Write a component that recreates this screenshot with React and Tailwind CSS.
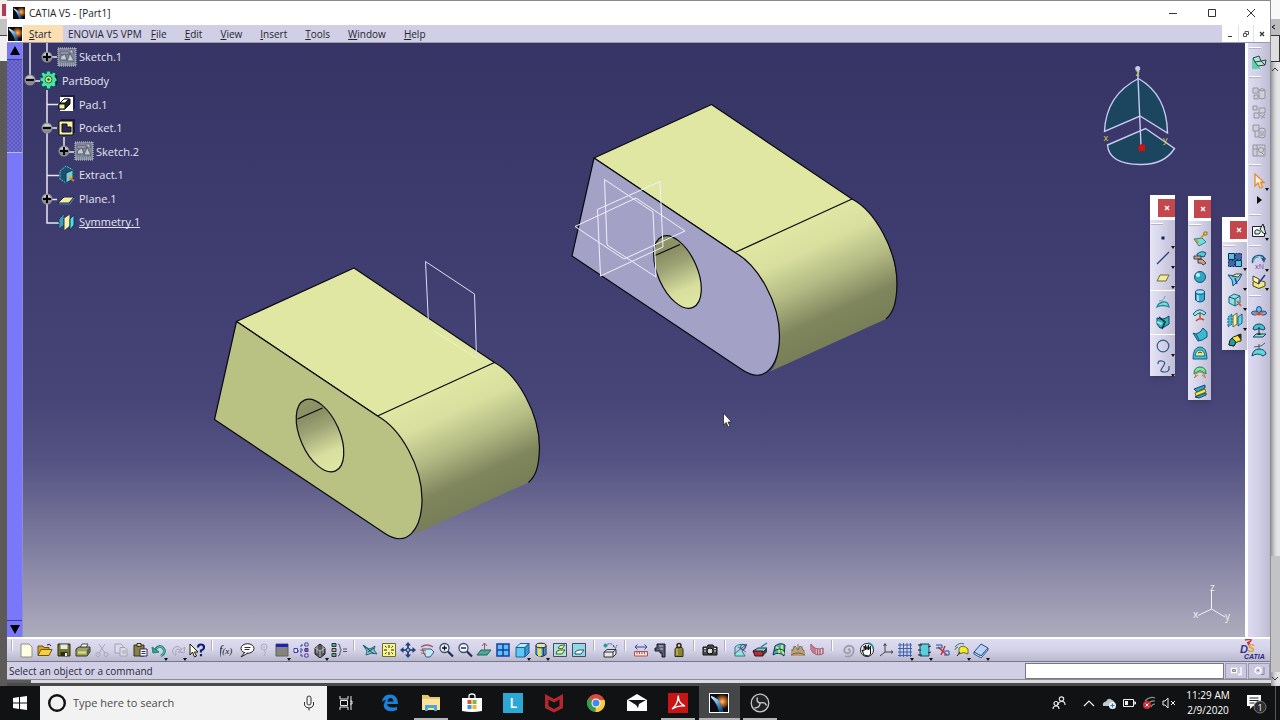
import React, { useId } from "react";

/* ---------- small 16x16 drawings used by the toolbars ---------- */

const K = "#1b1b2b";

const icons = {
  new: <path d="M3 2h8l3 3v10H3z" fill="#ffffe1" stroke="#8d8d80" />,
  open: (
    <>
      <path d="M1 13V4h5l1 1.500h5V8" fill="#d9a51c" stroke="#6d5510" />
      <path d="M1 13.500l3-6h11l-3 6z" fill="#f6cf42" stroke="#6d5510" />
      <path d="M10 3q3-2 4 1" fill="none" stroke={K} />
    </>
  ),
  save: (
    <>
      <path d="M2 2h12v12H2z" fill="#72772c" stroke="#2b2d14" />
      <path d="M4.500 2.500h7v4.500h-7z" fill="#e9e9f2" />
      <path d="M4.500 10h7v4h-7z" fill="#2b2d14" />
      <path d="M9 11h2v3H9z" fill="#e9e9f2" />
    </>
  ),
  print: (
    <>
      <path d="M5 6l2-4h6l-2 4z" fill="#fff" stroke="#445" />
      <path d="M1 7l3-2h11v5l-3 4H1z" fill="#9aa070" stroke="#34381f" />
      <path d="M3 10.500h8" stroke="#e6e35c" strokeWidth="2" />
      <path d="M12 8v5l3-3V5z" fill="#5b6136" />
    </>
  ),
  cut: (
    <g fill="none" stroke="#a9a9b8">
      <path d="M5 2l6 9M11 2L5 11" />
      <circle cx="4" cy="12.500" r="2" />
      <circle cx="12" cy="12.500" r="2" />
    </g>
  ),
  copy: (
    <g fill="#dcdbe9" stroke="#a3a3b3">
      <path d="M2 2h6l2 2v7H2z" />
      <path d="M7 5.500h5l2 2V14H7zM9 9h4M9 11h4" />
    </g>
  ),
  paste: (
    <>
      <path d="M2 3h10v11H2z" fill="#878241" stroke="#33321a" />
      <path d="M5 1.500h4v3H5z" fill="#d8d8a0" stroke="#33321a" />
      <path d="M8 7h7v7H8z" fill="#fff" stroke="#28286b" />
      <path d="M9.500 9.500h4M9.500 11.500h4" stroke="#28286b" />
    </>
  ),
  undo: (
    <>
      <path d="M4 8q4-6 8-2t-2 8" fill="none" stroke="#1f7f6d" strokeWidth="2.600" />
      <path d="M4.500 7.500q4-5 7.500-1.500t-2 8" fill="none" stroke="#57d9b0" />
      <path d="M1 5l1 6 6-1z" fill="#2da98c" stroke="#1f7f6d" />
    </>
  ),
  redo: (
    <g fill="none" stroke="#a9a9b8">
      <path d="M12 8Q8 2 4 6t2 8M6 13q-1-6 2-6t3 3" />
      <path d="M15 5l-1 6-6-1z" />
    </g>
  ),
  help: (
    <>
      <path d="M1 2v11l2.500-3 2 5 2-1-2-4H9z" fill="#fffdd0" stroke={K} />
      <path d="M9 5.500q0-3 3-3t3 2.700-3 3.300v2M12 12v2.200" fill="none" stroke="#14206e" strokeWidth="2.200" />
    </>
  ),
  fx: (
    <text x="-1" y="12" fontSize="12" fontStyle="italic" fill="#111" fontFamily="Liberation Serif, serif">
      f<tspan fontSize="9">(x)</tspan>
    </text>
  ),
  comment: (
    <g stroke="#222" fill="#fff">
      <ellipse cx="8.500" cy="6.500" rx="6.500" ry="4.800" />
      <path d="M6 10l-4 5 7-4" />
      <path d="M5.500 5.500h6M5.500 7.500h5" stroke="#333" />
    </g>
  ),
  ghost: (
    <g fill="none" stroke="#aaaab9">
      <circle cx="8" cy="5" r="3" />
      <path d="M8 8q3 2 0 6M7 5h2" />
    </g>
  ),
  table: (
    <>
      <path d="M2 2h12v12H2z" fill="#85857d" stroke="#5e5e66" />
      <path d="M2 2h12v3H2z" fill="#2121b4" />
    </>
  ),
  tree: (
    <g stroke="#3a3aa8" fill="#fff">
      <path d="M4 9h4M8 3v11M8 3h4M8 8h4M8 14h4" fill="none" strokeDasharray="2 1" />
      <path d="M1 6.500h3.500v4H1z" fill="#e8e8ff" />
      <path d="M12 1h3v3h-3z" />
      <path d="M12 6.500h3v3h-3z" fill="#d94545" />
      <path d="M12 12h3v3h-3z" />
    </g>
  ),
  ball: (
    <>
      <path d="M3 6l5-4 5 4v6l-5 4-5-4z" fill="#55555c" stroke="#1c1c1c" />
      <path d="M3 6l5 3 5-3M8 9v6M5 4v7M11 4v7" stroke="#b9b9c0" fill="none" />
    </>
  ),
  eq: (
    <>
      <path d="M1 1.500h4v3H1z" fill="#47b58a" stroke="#234" />
      <path d="M1 6.500h4v3H1z" fill="#e0a83e" stroke="#234" />
      <path d="M1 11.500h4v3H1z" fill="#47b58a" stroke="#234" />
      <path d="M7 2q2 0 2 3t1.500 3Q9 8 9 11t-2 3M12 7h4M12 9.500h4" fill="none" stroke="#556" />
    </>
  ),
  fly: (
    <>
      <path d="M1 3l6 4 3-1 3-2-1 4 3 4-5-1-6 2 1-4z" fill="#7fcfc8" stroke="#27677a" />
      <path d="M2 4l10 8M6 10l6-4" stroke="#1d4656" />
    </>
  ),
  fit: (
    <>
      <path d="M1.500 1.500h13v13h-13z" fill="#f7f58c" stroke="#6c6c2e" />
      <path d="M8 3v3M8 10v3M3 8h3M10 8h3M4 4l1.500 1.500M12 4l-1.500 1.500M4 12l1.500-1.500M12 12l-1.500-1.500" stroke="#222" />
    </>
  ),
  pan: (
    <>
      <path d="M8 2v12M2 8h12" stroke="#1c2f66" strokeWidth="1.600" />
      <path d="M8 0l3 3.500H5zM8 16l3-3.500H5zM0 8l3.500-3v6zM16 8l-3.500-3v6z" fill="#1c3f86" />
      <circle cx="8" cy="8" r="2" fill="#8fb7e8" stroke="#1c2f66" />
    </>
  ),
  rotate: (
    <>
      <path d="M2 5q6-4 12 0" fill="none" stroke="#b05656" strokeWidth="1.400" />
      <path d="M3 7h9l3 3-4 5H7z" fill="#c5e8f4" stroke="#315a86" />
      <path d="M1 8l6 1M2 11l5 1" stroke="#b05656" />
    </>
  ),
  zoomin: (
    <>
      <circle cx="6.500" cy="6" r="4.500" fill="#eef6ff" stroke="#3c4c76" strokeWidth="1.300" />
      <path d="M10 9.500l5 5" stroke="#222b4b" strokeWidth="2.200" />
      <path d="M4 6h5M6.500 3.500v5" stroke="#111" strokeWidth="1.300" />
    </>
  ),
  zoomout: (
    <>
      <circle cx="6.500" cy="6" r="4.500" fill="#eef6ff" stroke="#3c4c76" strokeWidth="1.300" />
      <path d="M10 9.500l5 5" stroke="#222b4b" strokeWidth="2.200" />
      <path d="M4 6h5" stroke="#111" strokeWidth="1.300" />
    </>
  ),
  normal: (
    <>
      <path d="M1 13l4-5h10l-4 5z" fill="#3fae9b" stroke="#1d6257" />
      <path d="M8.500 10V1M6 4l2.500-3L11 4" fill="none" stroke="#a05858" />
    </>
  ),
  multi: (
    <>
      <path d="M2 2h12v12H2z" fill="#57c4f5" stroke="#1d3b9e" strokeWidth="1.500" />
      <path d="M8 2v12M2 8h12" stroke="#1d3b9e" strokeWidth="1.500" />
    </>
  ),
  cube: (
    <>
      <path d="M2 5.500h9V15H2z" fill="#5fc8f2" stroke="#205e9c" />
      <path d="M2 5.500L6 1.500h9l-4 4z" fill="#b6ecff" stroke="#205e9c" />
      <path d="M11 5.500l4-4V11l-4 4z" fill="#3596d4" stroke="#205e9c" />
    </>
  ),
  cyl: (
    <>
      <path d="M3 3.500v9q5 4 10 0v-9" fill="#6ccde8" stroke={K} />
      <path d="M5 5h3v9.500H5z" fill="#e7de4d" />
      <path d="M9.500 5h2v9h-2z" fill="#23418b" />
      <ellipse cx="8" cy="3.500" rx="5" ry="2.300" fill="#dfe9ae" stroke={K} />
    </>
  ),
  view1: (
    <>
      <path d="M1.500 1.500h13v13h-13z" fill="#aee0ea" stroke="#4c4c58" />
      <path d="M4 12q0-4 4-4h5l-3 4zM6 6q1-3 5-3h2l-3 4z" fill="#f5ef98" stroke="#2c6a3c" />
    </>
  ),
  view2: (
    <>
      <path d="M1.500 1.500h13v13h-13z" fill="#8ddbe6" stroke="#4c4c58" />
      <path d="M4 12q0-4 5-4h4l-3 4z" fill="#fff" stroke="#2c4a7c" />
    </>
  ),
  print3d: (
    <>
      <path d="M3 4q5-5 10 1M11 4l2.500 2.500L15 3" fill="none" stroke="#2a4b9c" strokeDasharray="2 1" />
      <circle cx="3.500" cy="3.500" r="2" fill="#2d9b9b" />
      <path d="M2 10l3-2.500h9V12l-3 3H2zM2 10h9v5M11 10l3-2.500" fill="#e4e4ea" stroke="#333" />
    </>
  ),
  measure: (
    <>
      <path d="M2 5h12M4.500 2.500L2 5l2.500 2.500M11.500 2.500L14 5l-2.500 2.500" fill="none" stroke="#2a4b9c" />
      <path d="M1.500 9.500h13V14h-13z" fill="#fbe3d9" stroke="#b14e4e" />
      <path d="M4 10v2M6.500 10v2M9 10v2M11.500 10v2" stroke="#b14e4e" />
    </>
  ),
  caliper: (
    <>
      <path d="M5 2h8v13h-3v-4H8V9H3V6h2z" fill="#565c70" stroke="#16181f" />
      <path d="M7 4h4M8 7h3" stroke="#c5c9d6" />
    </>
  ),
  weight: (
    <>
      <path d="M5 5.500h6q1 1 1 2v7H4v-7q0-1 1-2z" fill="#8c8434" stroke="#302d10" />
      <circle cx="8" cy="3.500" r="2" fill="none" stroke="#302d10" strokeWidth="1.500" />
      <path d="M6 7v6" stroke="#d4cc78" />
    </>
  ),
  camera: (
    <>
      <path d="M1 5h4l1-2h5l1 2h3v8H1z" fill="#4a4a4a" stroke="#111" />
      <circle cx="8" cy="9" r="3" fill="#d8d8d8" stroke="#000" />
      <path d="M2 6.500h2M12 6.500h2M2 9h2M12 9h2" stroke="#ddd" />
    </>
  ),
  s1: (
    <>
      <path d="M2 5q4-4 12-2l-5 6 3 5H2z" fill="#8fe3e5" stroke="#287889" />
      <path d="M1 12L14 2M5 5l8 5" stroke="#b83a5e" fill="none" />
      <circle cx="10" cy="5" r="2.500" fill="none" stroke="#2a4b9c" />
    </>
  ),
  s2: (
    <>
      <path d="M1 9l5-3h9l-4 4z" fill="#6fdad4" stroke="#1e2f40" />
      <path d="M1 9h10v5H3z" fill="#b72d3c" stroke="#3c1018" />
      <path d="M11 10l4-4v4l-4 4z" fill="#38424f" />
      <path d="M9 5l6-4" stroke="#1d8e9c" strokeWidth="1.500" />
    </>
  ),
  s3: (
    <>
      <path d="M2 13L4 4q5-4 10-1l-1 11q-5-5-11-1z" fill="#35b6b0" stroke="#15395a" />
      <path d="M5 5q4 2 3 6M11 3q-1 5 2 9" stroke="#f0e558" strokeWidth="1.800" fill="none" />
      <path d="M3 9q6-4 10 0" stroke="#15395a" fill="none" />
    </>
  ),
  s4: (
    <>
      <path d="M2 14V7M4 14V4M6 14V6M8 14V2M10 14V6M12 14V4M14 14V8" stroke="#d37a28" strokeWidth="1.300" />
      <path d="M1 13q7-4 14 0M2 9l3-5 3 4 2-4 4 5" stroke="#247d8e" fill="none" />
    </>
  ),
  s5: (
    <g stroke="#b25e6c" fill="none">
      <path d="M2 2q4 7 12 4M2 8q4 7 12 4" />
      <path d="M2 2v6M4 4v7M6 6v6M8.500 7v6M11 7v6M14 6v6" strokeWidth="1.400" />
    </g>
  ),
  swirl: (
    <path d="M8 8q2-2 2 1t-4 2Q3 9 5 6t6-2q4 2 2 7t-8 3" fill="none" stroke="#9d9dab" strokeWidth="1.800" />
  ),
  hand: (
    <>
      <circle cx="8" cy="8" r="6.500" fill="#fff" stroke="#222" />
      <path d="M5 13l-2-5 2 1V4l1.500 4V3L8 7.500 9.500 3v5L11.500 4v8l-2 2z" fill="#fff" stroke="#111" />
      <path d="M9 1q5 1 5.500 6" stroke="#1c8e9a" strokeWidth="1.500" fill="none" />
    </>
  ),
  axis: (
    <path d="M7 2v8l-5 4M7 10h8M5.500 4L7 1.500 8.500 4M13 8.500l2 1.500-2 1.500" fill="none" stroke="#444" />
  ),
  grid: (
    <path d="M3 1v14M6.500 1v14M10 1v14M13.500 1v14M1 3h14M1 6.500h14M1 10h14M1 13.500h14" stroke="#3f62ae" />
  ),
  sheet: (
    <>
      <path d="M4 2h9v12H4z" fill="#5ad0d6" stroke="#1d4763" />
      <path d="M2 3h4M2 8h3M2 13h4M12 5l3-1M12 11l3-1" stroke="#222" />
    </>
  ),
  snapx: (
    <>
      <path d="M1 3h6v3H1M9 9h5v4H9" fill="#b8e0f4" stroke="#2a4b9c" />
      <path d="M3 5l9 8M10 4l-4 9" stroke="#bb2a3a" strokeWidth="1.400" />
    </>
  ),
  hl: (
    <>
      <path d="M5 12V6q4-4 9 1v5q-4-3-9 0z" fill="#f2ec2a" stroke="#6a6a22" />
      <path d="M1 5q4-5 9-3M1 8q1-3 3-3" fill="none" stroke="#27776e" />
      <path d="M3 14l3-4" stroke="#222" />
    </>
  ),
  eraser: (
    <>
      <path d="M1 10l7-8 7 4-7 8z" fill="#b9d4ef" stroke="#2a4b9c" />
      <path d="M1 10v2l7 4 7-8V6l-7 8z" fill="#e8f0fb" stroke="#2a4b9c" />
    </>
  ),

  /* vertical bars */
  workbench: (
    <>
      <path d="M1 4l9 11H1z" fill="#60d0ae" />
      <path d="M2 4l6-2 2 5 5-1-1 5-7 1-3-4z" fill="#b7e2d3" stroke="#22463c" />
      <path d="M4 8l6-1 4 4" fill="none" stroke="#22463c" />
    </>
  ),
  g1: (
    <g fill="#cfcfda" stroke="#94949f">
      <path d="M2 3h5v5H2zM3 10h4v4H3z" />
      <path d="M8 5q3-3 6 0v8q-3 2-6 0zM8 5q3 2 6 0" />
    </g>
  ),
  g2: (
    <g fill="#cfcfda" stroke="#94949f">
      <path d="M2 2h4v4H2zM8 4h6v5H8z" />
      <path d="M3 9h5v5H3zM9 11l5 3M14 10l-4 5" />
    </g>
  ),
  g3: (
    <g fill="#cfcfda" stroke="#94949f">
      <path d="M2 2h6v6H2zM4 8v6h4" />
      <path d="M8 6q3-2 6 0v8q-3 2-6 0z" />
      <path d="M10 8v5M12 8v5" />
    </g>
  ),
  g4: (
    <g fill="#cfcfda" stroke="#94949f">
      <path d="M2 3h12v11H2z" />
      <path d="M6 3v11M2 7h12M8 8l5 5" />
      <circle cx="10" cy="8" r="2.500" />
    </g>
  ),
  select: (
    <path d="M4 1v12l3-3 2 5 2.500-1L9.500 9.500H13z" fill="#fff5e0" stroke="#e8892c" strokeWidth="1.300" />
  ),
  play: <path d="M6 4l5 4-5 4z" fill="#111" />,
  sketcher: (
    <>
      <path d="M1.500 3.500h12v10h-12z" fill="#fff" stroke="#222" />
      <path d="M4 11q-1-5 3-4t1 4zM9 6l3-5 3 10-3-1z" fill="#d6efe4" stroke="#222" />
    </>
  ),
  xn: (
    <>
      <path d="M2 9Q1 3 7 2t6 4" fill="none" stroke="#235b86" strokeWidth="2.400" />
      <path d="M2.500 9Q2 3 7 2.500t5 3" fill="none" stroke="#76d2e2" />
      <path d="M10 4l5 0-2 5z" fill="#235b86" />
      <text x="4" y="15" fontSize="7" fill="#7a3ca6">xN</text>
    </>
  ),
  boxy: (
    <>
      <path d="M2 9l6-2 6 2v4l-6 2.500L2 13z" fill="#f1e780" stroke="#4d4618" />
      <path d="M2 3l6 3v5L2 8z" fill="#fbf6b0" stroke="#4d4618" />
      <path d="M7 11l7-9" stroke="#233c97" strokeWidth="1.500" />
    </>
  ),
  flower: (
    <>
      <ellipse cx="8" cy="5.500" rx="2.500" ry="3" fill="#5ad0d6" stroke="#22409a" />
      <ellipse cx="4" cy="9" rx="3.500" ry="2" fill="#5ab8e0" stroke="#22409a" />
      <ellipse cx="12" cy="9" rx="3.500" ry="2" fill="#5ab8e0" stroke="#22409a" />
      <path d="M3 8l10 3M13 8L3 11" stroke="#e2603c" strokeWidth="1.300" />
      <circle cx="8" cy="10" r="1.500" fill="#e03c3c" />
    </>
  ),
  surfA: (
    <>
      <path d="M2 6q1-5 6-5t6 5l-2 1q-4-3-8 0z" fill="#41c6c6" stroke="#173f7a" />
      <path d="M2 14l3-3h10l-3 3z" fill="#86e6c2" stroke="#173f7a" />
      <path d="M8 4v8M6 11h4" stroke="#222" />
    </>
  ),
  surfB: (
    <>
      <path d="M1 14q1-7 7-7t7 5l-3 2q-5-4-11 0z" fill="#58dcd2" stroke="#173f7a" />
      <path d="M3 5l7-1 4-3M8 2v6" stroke="#4c5c73" fill="none" />
    </>
  ),
  dot: <path d="M6.500 6.500h3v3h-3z" fill="#14204a" />,
  line: <path d="M2 14L14 2" stroke="#27406f" strokeWidth="1.300" />,
  plane: <path d="M2 11l3-6h9l-3 6z" fill="#f1eb9c" stroke="#6e6a30" />,
  proj: (
    <>
      <path d="M2 13q1-4 6-5t6 5q-6-3-12 0z" fill="#7ee8a8" stroke="#2285b5" strokeWidth="1.300" />
      <path d="M4 7q5 0 6-5" fill="none" stroke="#66a7a0" />
    </>
  ),
  inter: (
    <>
      <path d="M2 4q6 3 12-2v8q-5 4-9 4l-3-4z" fill="#35b5a5" stroke="#173f7a" />
      <path d="M4 3l6 5-3 7" fill="none" stroke="#112c5a" strokeWidth="1.600" />
      <path d="M2 8l5 2" stroke="#7fe9e9" strokeWidth="2" />
    </>
  ),
  circle: <circle cx="8" cy="8" r="5.800" fill="none" stroke="#2e5c8c" strokeWidth="1.200" />,
  spline: (
    <path d="M3 6Q3 2 7 3t2 4-3 5 4 2 4-6" fill="none" stroke="#2e4c8c" strokeWidth="1.200" />
  ),
  extr: (
    <>
      <path d="M2 8l8-1 4 4-7 4z" fill="#6fe0d2" stroke="#2a7fa6" />
      <path d="M9 7l4-5M4 8l2 4" stroke="#c79a1e" strokeWidth="1.800" />
      <path d="M12 1h3v3h-3z" fill="#e8d24e" stroke="#8c7a20" />
    </>
  ),
  rev: (
    <>
      <path d="M5 4q5-4 9-1l-2 4q-4-2-6 1z" fill="#4fc9d6" stroke="#1a4d7b" />
      <path d="M2 6h7v3H2zM6 9q5-1 8 4l-3 2q-1-3-5-2z" fill="#e2a064" stroke="#30406b" />
    </>
  ),
  sphere: (
    <>
      <circle cx="8" cy="8" r="5.500" fill="#2fa7c4" stroke="#14546f" />
      <circle cx="6" cy="6" r="2" fill="#b8f5fa" />
    </>
  ),
  tube: (
    <>
      <path d="M3.500 4v8q4.500 4 9 0V4" fill="#36a8d2" stroke="#144a74" />
      <ellipse cx="8" cy="4" rx="4.500" ry="2.200" fill="#9ae8f4" stroke="#144a74" />
      <path d="M6 7v6" stroke="#b4f2fa" strokeWidth="1.500" />
    </>
  ),
  offset: (
    <>
      <path d="M1 7q6-8 13-1l-2 2q-5-4-9 1z" fill="#8fe6e3" stroke="#1d5a8b" />
      <path d="M4 14q3-4 8-1M8 5v6" stroke="#b2542c" fill="none" strokeWidth="1.500" />
    </>
  ),
  sweep: (
    <>
      <path d="M1 7l3 1q5-1 7-6l4 4v5q-5 4-9 4z" fill="#37bcd0" stroke="#164e7c" />
      <path d="M4 8l3 6" stroke="#164e7c" />
    </>
  ),
  fill: (
    <>
      <path d="M1 14q0-12 7-12t7 12z" fill="#3bc4ce" stroke="#1d5a8b" />
      <path d="M3 11q1-6 5-6t5 6z" fill="#f4e87c" stroke="#1d6d9b" />
      <path d="M6 8q2-2 4 0" stroke="#27406f" fill="none" />
    </>
  ),
  loft: (
    <>
      <path d="M2 10q0-7 6-7t6 7l-3-2q-3-3-6 0z" fill="#7bea9c" stroke="#1f7a5b" />
      <path d="M3 13q1-5 5-5t5 5M2 14l4-3M14 14l-4-3" fill="none" stroke="#bb7c22" />
    </>
  ),
  blend: (
    <>
      <path d="M2 6l11-4v3L5 9z" fill="#2fa8c9" stroke="#173f7a" />
      <path d="M3 10l10-4 1 3-10 4z" fill="#f4ea3c" stroke="#77701a" />
      <path d="M3 14l11-4v2l-7 3z" fill="#35c2bd" stroke="#173f7a" />
    </>
  ),
  joinq: (
    <>
      <path d="M1.500 1.500h6v6h-6zM8.500 8.500h6v6h-6z" fill="#4fc3dc" stroke="#112c5a" />
      <path d="M8.500 1.500h6v6h-6zM1.500 8.500h6v6h-6z" fill="#3b66b4" stroke="#112c5a" strokeDasharray="2 1" />
    </>
  ),
  trim: (
    <>
      <path d="M1 3l9 1 5-2-3 6-6 6-1-6z" fill="#62d4dc" stroke="#1c4b80" />
      <path d="M5 4l4-2h5l-3 3z" fill="#f3f1c8" stroke="#444" />
      <path d="M8 6l2 6" stroke="#5530a0" strokeWidth="1.500" />
    </>
  ),
  extract: (
    <>
      <path d="M2 5l5-3 6 2v7l-5 3-6-3z" fill="#8fdde2" stroke="#1e6b7b" />
      <path d="M2 5l6 2 5-3M8 7v7" fill="none" stroke="#175a7b" />
      <path d="M10 9l4 5" stroke="#c9652a" strokeWidth="2" />
    </>
  ),
  symm: (
    <>
      <path d="M1 5l4-3v10l-4 3z" fill="#4ab8c4" stroke="#1b5a8b" strokeDasharray="2 1" />
      <path d="M6 4l4-3v11l-4 3z" fill="#f6f2a4" stroke="#5c6b2b" />
      <path d="M11 5l4-3v9l-4 3z" fill="#5cdbe2" stroke="#1b5a8b" />
    </>
  ),
  tool: (
    <>
      <path d="M2 13q1-8 7-9l5-2v7q-5 0-7 5z" fill="#f4e43c" stroke="#2d2d12" />
      <path d="M2 13q0-5 3-7l4 4-2 4z" fill="#2a9d98" stroke="#123" />
      <path d="M10 3l4-1v6z" fill="#252a2a" />
    </>
  ),
};

/* tree icons */
const treeIcons = {
  sketch: (
    <>
      <path d="M1 1h18v18H1z" fill="#7f8499" stroke="#c9d3dc" strokeDasharray="1 1" />
      <path d="M3 5h9v2H3zM4 9l4-2 2 6H3zM10 14l3-8 4 8zM12 3h4v4" fill="#c3c7d0" stroke="#5c6174" />
      <path d="M2 17h16" stroke="#8fcfcf" strokeDasharray="1 1" />
    </>
  ),
  gear: (
    <>
      <path d="M7 1h3l1 3 3-2 2 2-1 3 3 1v3l-3 1 1 3-2 2-3-1-1 3H7l-1-3-3 1-2-2 2-3-3-1V8l3-1-2-3 2-2 3 2z" fill="#4be3a3" stroke="#0f5a60" />
      <circle cx="8.500" cy="9.500" r="3.500" fill="#c9ee6a" stroke="#16655c" />
      <circle cx="8.500" cy="9.500" r="1.200" fill="#16444c" />
      <path d="M15 5q4 4 1 10" stroke="#0f2048" fill="none" strokeWidth="1.500" />
    </>
  ),
  pad: (
    <>
      <path d="M4 1h14v14H4z" fill="#1c1b4e" />
      <path d="M3 3h13v14H3z" fill="#fff" />
      <path d="M2 10l5-5h6v5l-5 5H2z" fill="#26252a" stroke="#111" />
      <path d="M2 10h6v5H2z" fill="#f3f0a8" stroke="#111" />
      <path d="M3 9l4-4h5l-4 4z" fill="#fbfad8" stroke="#111" />
    </>
  ),
  pocket: (
    <>
      <path d="M4 1h14v14H4z" fill="#1c1b4e" />
      <path d="M2 3h14v14H2z" fill="#f5f2a2" stroke="#111" />
      <path d="M5 6h5v3h4v5H5z" fill="#2c2a63" stroke="#111" />
    </>
  ),
  extract: (
    <>
      <path d="M3 6l6-5 7 4v8l-7 5-6-4z" fill="#1f4f6a" stroke="#4fd0e0" strokeDasharray="2 1" />
      <path d="M9 8l7-3v9l-7 4z" fill="#62d3ea" stroke="#0e3a55" />
      <path d="M11 10h4v4h-3z" fill="#e0b050" />
      <path d="M13 13l4 3" stroke="#e07030" strokeWidth="2" />
    </>
  ),
  plane: (
    <>
      <path d="M1 14l6-6h10l-5 6z" fill="#f3ee9c" stroke="#26254e" />
      <path d="M2 15h11l4-6" fill="none" stroke="#3f8aa8" />
    </>
  ),
  symmetry: (
    <>
      <path d="M2 7l5-5v11l-5 4z" fill="#3f9cb5" stroke="#12385e" strokeDasharray="2 1" />
      <path d="M7 6l6-4v12l-6 5z" fill="#f7f3a5" stroke="#2c3d55" />
      <path d="M13 7l4-4v10l-4 5z" fill="#57dcdc" stroke="#12385e" />
    </>
  ),
};

function Ico({ n }) {
  return (
    <svg viewBox="0 0 16 16" className="size-4 shrink-0" aria-hidden="true" fontFamily="Open Sans, sans-serif">
      {icons[n]}
    </svg>
  );
}

function Tool({ n, label, drop, slot = "h-[19px] w-[19px]" }) {
  return (
    <button aria-label={label} className={`relative flex shrink-0 items-center justify-center ${slot}`}>
      <Ico n={n} />
      {drop && (
        <svg viewBox="0 0 4 3" className="absolute right-0 -bottom-px h-[3px] w-1" aria-hidden="true">
          <path d="M0 0h4L2 3z" fill="#111" />
        </svg>
      )}
    </button>
  );
}

function CatiaMark({ className }) {
  const id = useId();
  return (
    <svg viewBox="0 0 16 16" className={className} aria-hidden="true">
      <defs>
        <radialGradient id={`${id}glow`} cx="0.680" cy="0.420" r="0.420">
          <stop offset="0" stopColor="#ffc070" />
          <stop offset="0.450" stopColor="#c4641c" />
          <stop offset="1" stopColor="#0a0c12" />
        </radialGradient>
        <linearGradient id={`${id}beam`} x1="0" y1="0" x2="0.700" y2="1">
          <stop offset="0" stopColor="#f2fbff" />
          <stop offset="0.450" stopColor="#6db9ea" />
          <stop offset="1" stopColor="#12457f" />
        </linearGradient>
      </defs>
      <rect width="16" height="16" fill="#0a0c12" />
      <rect width="16" height="16" fill={`url(#${id}glow)`} />
      <path d="M1 1.500q6 2.500 8 6 2 3 3 8.500H8Q7 9 1 3z" fill={`url(#${id}beam)`} />
      <path d="M0 3q5 5 7.500 13H0z" fill="#0a0c12" />
    </svg>
  );
}

/* ---------- menu bar ---------- */

const menus = ["File", "Edit", "View", "Insert", "Tools", "Window", "Help"];

function TitleBar() {
  return (
    <header className="flex h-[25px] items-center border-t border-[#8a8a8e] bg-white pl-[6px]">
      <CatiaMark className="size-3" />
      <h1 className="pl-1 text-[10px] leading-none text-[#222]">CATIA V5 - [Part1]</h1>
      <div className="ml-auto flex h-full">
        <button aria-label="Minimize" className="flex w-[39px] items-center justify-center">
          <svg viewBox="0 0 10 10" className="size-[10px]"><path d="M1 5.500h8" stroke="#333" /></svg>
        </button>
        <button aria-label="Maximize" className="flex w-[39px] items-center justify-center">
          <svg viewBox="0 0 10 10" className="size-[10px]"><path d="M1.500 1.500h7v7h-7z" fill="none" stroke="#333" /></svg>
        </button>
        <button aria-label="Close" className="flex w-[39px] items-center justify-center">
          <svg viewBox="0 0 10 10" className="size-[10px]"><path d="M1 1l8 8M9 1L1 9" stroke="#333" /></svg>
        </button>
      </div>
    </header>
  );
}

function MenuBar() {
  return (
    <nav className="flex h-[18px] items-stretch border-b border-[#9b9aa8] bg-[#d0cfe6] text-[10px] leading-none text-[#26262e]">
      <div className="flex w-4 items-center justify-center bg-white"><CatiaMark className="size-[14px]" /></div>
      <button className="flex w-10 items-center bg-[#fadfb4] pl-[6px]">
        <span><u>S</u>tart</span>
      </button>
      <button className="pl-[5px]">ENOVIA V5 VPM</button>
      {menus.map((m) => (
        <button key={m} className="px-[9px]">
          <u>{m[0]}</u>{m.slice(1)}
        </button>
      ))}
      <div className="ml-auto flex bg-white">
        <button aria-label="Minimize part" className="flex w-4 items-center justify-center">
          <svg viewBox="0 0 8 8" className="size-2"><path d="M2 6.500h4" stroke="#333" /></svg>
        </button>
        <button aria-label="Restore part" className="flex w-4 items-center justify-center border-x border-[#e2e2ec]">
          <svg viewBox="0 0 8 8" className="size-2"><path d="M1.500 3.500h3v3h-3zM3 3V1.500h3.500v3H5" fill="none" stroke="#555" /></svg>
        </button>
        <button aria-label="Close part" className="flex w-4 items-center justify-center">
          <svg viewBox="0 0 8 8" className="size-2"><path d="M2 2l4 4M6 2L2 6" stroke="#333" strokeWidth="1.300" /></svg>
        </button>
      </div>
    </nav>
  );
}

/* ---------- scroll rail ---------- */

function ScrollRail() {
  return (
    <div className="flex w-4 shrink-0 flex-col border-r border-[#8f8fd0] bg-[#7a78fa]">
      <button aria-label="Scroll up" className="flex h-[17px] items-center justify-center border-b border-[#3c3ba0]">
        <svg viewBox="0 0 10 10" className="size-[10px]"><path d="M5 0l5 9H0z" fill="#000" /></svg>
      </button>
      <div className="h-[93px] border-b border-[#b9b8ff] bg-[repeating-conic-gradient(#5c5ac0_0_25%,#6e6cd4_0_50%)] bg-[length:4px_4px]" />
      <div className="flex-1" />
      <button aria-label="Scroll down" className="flex h-[17px] items-center justify-center border-t border-[#3c3ba0]">
        <svg viewBox="0 0 10 10" className="size-[10px]"><path d="M0 1h10L5 10z" fill="#000" /></svg>
      </button>
    </div>
  );
}

/* ---------- specification tree ---------- */

const tree = [
  { name: "Sketch.1", icon: "sketch", level: 1, knob: "+" },
  { name: "PartBody", icon: "gear", level: 0, knob: "-" },
  { name: "Pad.1", icon: "pad", level: 1 },
  { name: "Pocket.1", icon: "pocket", level: 1, knob: "-" },
  { name: "Sketch.2", icon: "sketch", level: 2, knob: "+" },
  { name: "Extract.1", icon: "extract", level: 1 },
  { name: "Plane.1", icon: "plane", level: 1, knob: "+" },
  { name: "Symmetry.1", icon: "symmetry", level: 1, active: true },
];
const indents = ["pl-px", "pl-[18px]", "pl-[35px]"];

function Knob({ sign }) {
  return (
    <button aria-label={sign === "+" ? "Expand" : "Collapse"} className="size-3 shrink-0">
      <svg viewBox="0 0 12 12" className="size-3">
        <circle cx="6" cy="6" r="5.500" fill="#8b8b93" />
        <path d="M1.500 4.500Q6-1.500 10.500 4.500z" fill="#c9c9cf" />
        <path d={sign === "+" ? "M2 6h8M6 2v8" : "M2 6h8"} stroke="#000" strokeWidth="2" />
      </svg>
    </button>
  );
}

function SpecTree() {
  return (
    <div className="relative w-[130px] pt-[2px]">
      <svg viewBox="0 0 130 191" className="absolute inset-0 h-[191px] w-[130px]" aria-hidden="true">
        <path
          d="M7 0V38M24 0V14M24 14h10M7 38h10M24 47V180H36M24 61.500h12M24 85h10M41 94V109h10M24 132.500h12M24 156.500h10"
          fill="none" stroke="#e6e6f0" strokeWidth="1.500"
        />
      </svg>
      <ul className="relative grid h-[189px] auto-rows-fr text-[11px] leading-none text-[#e4e4f2]">
        {tree.map((t) => (
          <li key={t.name} className={`flex items-center ${indents[t.level]}`}>
            {t.knob ? <Knob sign={t.knob} /> : <span className="w-3 shrink-0" />}
            <svg viewBox="0 0 20 20" className="ml-1 size-5 shrink-0" aria-hidden="true">{treeIcons[t.icon]}</svg>
            <span className={t.active ? "ml-[2px] border-b border-[#e4e4f2]" : "ml-[2px]"}>{t.name}</span>
          </li>
        ))}
      </ul>
    </div>
  );
}

/* ---------- 3D scene ---------- */

function Solid({ face, transform, children }) {
  return (
    <g transform={transform} stroke="#0a0a10" strokeWidth="1.200" strokeLinejoin="round">
      <path d="M735 252.500C758 265 780 303 779.500 337C779 353 777 366 770 371.500L886 319C894 312 897 302 896.500 284C897 250 875 211 852 199Z" fill="url(#roll)" stroke="none" />
      <path d="M594 158L711.500 104.500L852 199L735 252.500Z" fill="#dfe7a3" />
      <path d="M852 199C875 211 897 250 897 284C896.500 302 894 312 886 319" fill="none" />
      <path d="M594 158L735 252.500C758 265 780 303 779.500 337C779 365 765 386 741 369L572 256Z" fill={face} />
      <g transform="rotate(66.300 677.500 272)">
        <ellipse cx="677.500" cy="272" rx="38.600" ry="19.700" fill="url(#bore)" />
      </g>
      <path d="M655 255.500L680 244.500" />
      {children}
    </g>
  );
}

function Scene() {
  return (
    <svg viewBox="23 43 1222 594" preserveAspectRatio="xMidYMid slice" className="absolute inset-0 h-full w-full" role="img" aria-label="Part geometry">
      <defs>
        <linearGradient id="roll" gradientUnits="userSpaceOnUse" x1="793" y1="226" x2="844" y2="338">
          <stop offset="0" stopColor="#dfe7a3" />
          <stop offset="0.220" stopColor="#d9e09f" />
          <stop offset="0.500" stopColor="#b2b983" />
          <stop offset="0.780" stopColor="#7f855c" />
          <stop offset="1" stopColor="#787e57" />
        </linearGradient>
        <linearGradient id="bore" x1="0" y1="0.500" x2="1" y2="0.500">
          <stop offset="0" stopColor="#8f9567" />
          <stop offset="0.220" stopColor="#8a9063" />
          <stop offset="0.400" stopColor="#9da375" />
          <stop offset="0.750" stopColor="#d8df9e" />
          <stop offset="1" stopColor="#dfe7a3" />
        </linearGradient>
      </defs>
      <Solid face="#a4a1c6" />
      <g fill="none" stroke="#f0f0ff">
        <path d="M604.500 179.500L653 212L656 277L607 245Z" />
        <path d="M660 181.500L663 247L600.500 276L597.500 209.500Z" />
        <path d="M575 226.500L636 198L685 231L624 259Z" />
      </g>
      <Solid face="#b9c183" transform="translate(-357.500 163.500)" />
      <g fill="none" stroke="#dcdcf4">
        <path d="M428.500 324L425.500 261.500L474.500 294L476.500 358" />
        <path d="M434 331L476.500 358" stroke="#eef2c4" />
      </g>
      <path d="M723.500 413v12l2.700-2.500 2 4.500 1.800-.8-2-4.200h3.500z" fill="#fff" stroke="#222" strokeWidth="0.800" />
    </svg>
  );
}

function Compass() {
  return (
    <svg viewBox="1100 64 80 104" className="absolute top-[21px] right-[65px] h-[104px] w-20" aria-label="Compass" role="img" fontFamily="Open Sans, sans-serif" fontSize="9">
      <g fill="#1c4560" stroke="#c9c9f4" strokeWidth="1.400">
        <path d="M1138.500 78.500Q1106 95 1104.500 131.500L1140 116L1167.500 133Q1167 95 1138.500 78.500Z" />
        <path d="M1107.500 145L1145.500 128.500L1174.500 148.500Q1164 165 1140 164.500Q1109 164 1107.500 145Z" />
        <path d="M1138 70V78L1141 146" fill="none" />
      </g>
      <circle cx="1137.700" cy="68.500" r="2.500" fill="#c9c9f4" />
      <path d="M1138 147l3-3 4 1v6h-6z" fill="#d40f0f" />
      <g fill="#d8d838">
        <text x="1135.500" y="76">z</text>
        <text x="1103.500" y="141">x</text>
        <text x="1163" y="143">y</text>
      </g>
    </svg>
  );
}

function AxisTriad() {
  return (
    <svg viewBox="1190 580 44 44" className="absolute right-[11px] bottom-[13px] size-11" aria-hidden="true" fontFamily="Open Sans, sans-serif" fontSize="10" fill="#f2f2fa">
      <path d="M1211.500 591V609L1198 615.500M1211.500 609L1225 617" fill="none" stroke="#f2f2fa" />
      <text x="1210" y="591">z</text>
      <text x="1193" y="618">x</text>
      <text x="1225" y="620">y</text>
    </svg>
  );
}

/* ---------- toolbars ---------- */

function Grip({ size = "h-3" }) {
  return (
    <div className={`flex w-full items-center pl-px ${size}`}>
      <span className="h-[2px] w-3 border-t border-white bg-[#b4b3c8]" />
    </div>
  );
}

const railGroups = [
  [["workbench", "Workbench"]],
  [["g1", "Body tool 1"], ["g2", "Body tool 2"], ["g3", "Body tool 3"], ["g4", "Body tool 4"]],
  [["select", "Select", 1], ["play", "More"]],
  [["sketcher", "Sketcher", 1]],
  [["xn", "Repeat", 1], ["boxy", "Work on support", 1]],
  [["flower", "Law"], ["surfA", "Project surface"], ["surfB", "Develop"]],
];

function RightRail() {
  return (
    <aside className="flex w-[25px] shrink-0 flex-col items-center border-l-[3px] border-white bg-linear-to-r from-[#dcdbf0] via-[#d0cfe6] to-[#bdbcd2]">
      {railGroups.map((g, i) => (
        <React.Fragment key={i}>
          <Grip size={i === 0 ? "h-[9px]" : "h-3"} />
          {g.map(([n, label, drop]) => <Tool key={n} n={n} label={label} drop={drop} />)}
        </React.Fragment>
      ))}
    </aside>
  );
}

function FloatBar({ className, groups, slot, label }) {
  return (
    <section aria-label={label} className={`absolute flex flex-col items-center bg-linear-to-r from-[#e6e5f5] via-[#d3d2e8] to-[#bfbed6] shadow-md ${className}`}>
      <div className="flex h-[25px] w-full items-center justify-end bg-white">
        <button aria-label={`Close ${label}`} className="flex h-[18px] w-[17px] items-center justify-center bg-[#c4474d]">
          <svg viewBox="0 0 8 8" className="size-2"><path d="M2 2l4 4M6 2L2 6" stroke="#fff" strokeWidth="1.400" /></svg>
        </button>
      </div>
      <Grip size="h-2" />
      {groups.map((g, i) => (
        <React.Fragment key={i}>
          {i > 0 && <div className="flex h-1 w-full items-center"><span className="h-px w-full bg-white" /></div>}
          {g.map(([n, l, drop]) => <Tool key={n} n={n} label={l} drop={drop} slot={slot} />)}
        </React.Fragment>
      ))}
    </section>
  );
}

const wireframe = [
  [["dot", "Point", 1], ["line", "Line", 1], ["plane", "Plane", 1]],
  [["proj", "Projection"], ["inter", "Intersection"]],
  [["circle", "Circle", 1], ["spline", "Spline", 1]],
];
const surfaces = [[
  ["extr", "Extrude"], ["rev", "Revolve"], ["sphere", "Sphere"], ["tube", "Cylinder"], ["offset", "Offset"],
  ["sweep", "Sweep"], ["fill", "Fill"], ["loft", "Multi-sections surface"], ["blend", "Blend"],
]];
const operations = [[
  ["joinq", "Join", 1], ["trim", "Split", 1], ["extract", "Extract", 1], ["symm", "Symmetry", 1], ["tool", "Extrapolate"],
]];

const bottomGroups = [
  [["new", "New"], ["open", "Open"], ["save", "Save"], ["print", "Print"], ["cut", "Cut"], ["copy", "Copy"], ["paste", "Paste"], ["undo", "Undo", 1], ["redo", "Redo", 1], ["help", "What's this?"]],
  [["fx", "Formula"], ["comment", "Comment"], ["ghost", "Check"], ["table", "Design table", 1], ["tree", "Relations"], ["ball", "Knowledge", 1], ["eq", "Equivalent dimensions"]],
  [["fly", "Fly mode"], ["fit", "Fit all in"], ["pan", "Pan"], ["rotate", "Rotate"], ["zoomin", "Zoom in"], ["zoomout", "Zoom out"], ["normal", "Normal view"], ["multi", "Multi-view"], ["cube", "Isometric view", 1], ["cyl", "Shading", 1], ["view1", "Hide/Show"], ["view2", "Swap visible space"]],
  [["print3d", "Quick print"]],
  [["measure", "Measure between"], ["caliper", "Measure item"], ["weight", "Measure inertia"]],
  [["camera", "Capture"]],
  [["s1", "Connect checker"], ["s2", "Draft analysis"], ["s3", "Surface curvature"], ["s4", "Porcupine curvature"], ["s5", "Curve analysis"]],
  [["swirl", "Update"], ["hand", "Manual update"], ["axis", "Axis system"], ["grid", "Work support grid", 1], ["sheet", "Historical graph", 1], ["snapx", "Snap to point"], ["hl", "Catalog", 1], ["eraser", "Sweep clean", 1]],
];

function BottomBar() {
  return (
    <div className="flex h-6 items-center border-t-2 border-white bg-linear-to-b from-[#dddcf0] via-[#d3d2e8] to-[#b9b8cd]">
      {bottomGroups.map((g, i) => (
        <React.Fragment key={i}>
          <div className={`flex shrink-0 justify-center self-stretch pt-px ${i === 0 ? "w-[9px]" : "w-3"}`}>
            <span className="h-[11px] w-[2px] border-r border-white bg-[#b0afc4]" />
          </div>
          {g.map(([n, l, drop]) => (
            <Tool key={n} n={n} label={l} drop={drop} slot={n === "ghost" ? "h-[19px] w-4" : "h-[19px] w-[19px]"} />
          ))}
        </React.Fragment>
      ))}
      <svg viewBox="0 0 30 22" className="mr-px ml-auto h-[22px] w-[30px] shrink-0" role="img" aria-label="DS CATIA" fontFamily="Liberation Sans, sans-serif" fontStyle="italic">
        <path d="M6 1q6-1.500 6 0t-4 3q4-1 1 2" fill="none" stroke="#c8353f" strokeWidth="1.600" />
        <text x="1" y="13.500" fontSize="11" fontWeight="700" fill="#39308c">D</text>
        <text x="8.500" y="13" fontSize="11" fontWeight="700" fill="#e6a02e">S</text>
        <text x="5" y="19.500" fontSize="7" fontWeight="700" fill="#2c2580">CATIA</text>
      </svg>
    </div>
  );
}

function StatusBar() {
  return (
    <footer className="flex h-[18px] items-center border-t border-[#77778a] bg-[#d1cfe6] text-[10px] text-[#2a2a36]">
      <span className="pl-[2px] leading-none">Select an object or a command</span>
      <input aria-label="Power input" className="ml-auto h-4 w-[199px] border border-[#77778a] bg-white px-1 outline-none" />
      <button aria-label="Command list" className="ml-px flex h-4 w-[22px] items-center justify-center border border-[#9998ac] bg-[#c9c8de]">
        <svg viewBox="0 0 12 10" className="h-[10px] w-3"><path d="M1.500 2.500h5v4h-5zM8 8.500h3V1" fill="none" stroke="#fff" strokeWidth="1.300" /><path d="M2.500 3.500h3v2h-3z" fill="none" stroke="#8a899c" /></svg>
      </button>
      <button aria-label="Command options" className="ml-px flex h-4 w-[22px] items-center justify-center border border-[#9998ac] bg-[#c9c8de]">
        <svg viewBox="0 0 12 10" className="h-[10px] w-3"><circle cx="5" cy="4.500" r="3" fill="none" stroke="#fff" strokeWidth="1.300" /><path d="M4 4.500h2M8 8.500h3V1" fill="none" stroke="#8a899c" /></svg>
      </button>
    </footer>
  );
}

/* ---------- Windows taskbar ---------- */

const apps = [
  { name: "Edge", art: <path d="M2 9Q3 1 10.500 1.500 18 2 18 11H7q1 5 10 3v3q-8 3-12-1-3-4 1-9-2 0-4 2zM7.500 8.500h6q-.5-3.500-3-3.500t-3 3.500z" fill="#1b80d8" /> },
  { name: "File Explorer", open: true, art: (<><path d="M1 2h6l2 2h10v13H1z" fill="#e8c76a" /><path d="M1 6h18v11H1z" fill="#fbe39c" /><path d="M4 18v-6h12v6h-3v-3H7v3z" fill="#4aa7dc" /></>) },
  { name: "Microsoft Store", art: (<><path d="M7 5V3q0-2 3-2t3 2v2" fill="none" stroke="#fff" strokeWidth="1.300" /><path d="M0 5h20v13q-10 2-20 0z" fill="#fff" /><path d="M5.500 7h4v4h-4z" fill="#e8502c" /><path d="M10.500 7h4v4h-4z" fill="#7fb93c" /><path d="M5.500 12h4v4h-4z" fill="#2f9ae0" /><path d="M10.500 12h4v4h-4z" fill="#f4b62c" /></>) },
  { name: "Lenovo", art: (<><path d="M0 0h20v20H0z" fill="#2ba8d4" /><text x="6.500" y="15" fontSize="14" fill="#fff" fontWeight="600">L</text></>) },
  { name: "McAfee", art: <path d="M1 1l9 5 9-5v14l-9 4.500L1 15zM4.500 6.500v6.500l5.500 3 5.500-3V6.500L10 9.500z" fill="#b5272f" fillRule="evenodd" /> },
  { name: "Chrome", art: (<><circle cx="10" cy="10" r="9" fill="#dd4b3e" /><path d="M10 10L2.200 5.500A9 9 0 0 0 9.500 19z" fill="#2da14f" /><path d="M10 10l-.5 9A9 9 0 0 0 18.500 7H10z" fill="#f7ce3e" /><circle cx="10" cy="10" r="4.500" fill="#fff" /><circle cx="10" cy="10" r="3.500" fill="#4a86e8" /></>) },
  { name: "Mail", art: (<><path d="M0 7l10-6 10 6v11H0z" fill="#fff" /><path d="M1 7h18l-7 4-1 4-2-3z" fill="#161616" /></>) },
  { name: "Acrobat", open: true, art: (<><path d="M0 0h20v20H0z" fill="#c81414" /><path d="M4 16q6-5 6-12 0-2 .5 0 0 6 6.500 9-7-1-13 3z" fill="none" stroke="#fff" strokeWidth="1.300" /></>) },
  { name: "CATIA", open: true, active: true },
  { name: "OBS", open: true, art: (<><circle cx="10" cy="10" r="8.800" fill="#222" stroke="#c9c9c9" strokeWidth="1.300" /><path d="M7.500 4.500Q6 9 10 10q5-1.500 6.500 2.500M10 10q0 5-5.500 5" fill="none" stroke="#c9c9c9" strokeWidth="1.400" /></>) },
];

function Taskbar() {
  return (
    <div className="flex h-[34px] shrink-0 items-stretch bg-[#111213] text-white">
      <button aria-label="Start menu" className="flex w-10 items-center justify-center">
        <svg viewBox="0 0 14 14" className="size-[14px]"><path d="M0 2l6-1v5.500H0zM7 1l7-1v6.500H7zM0 7.500h6V13l-6-1zM7 7.500h7V14l-7-1z" fill="#fff" /></svg>
      </button>
      <label className="flex w-[287px] items-center bg-[#f2f2f2] pl-[7px]">
        <svg viewBox="0 0 20 20" className="size-5 shrink-0"><circle cx="10" cy="10" r="7.800" fill="none" stroke="#111" strokeWidth="2.400" /></svg>
        <input aria-label="Search" placeholder="Type here to search" className="ml-[6px] w-0 flex-1 bg-transparent text-[11px] text-[#444] outline-none placeholder:text-[#4c4c4c]" />
        <svg viewBox="0 0 12 16" className="mr-3 h-4 w-3"><rect x="4" y="1" width="4" height="9" rx="2" fill="none" stroke="#333" /><path d="M1.500 7v3q1 3 4.500 3t4.500-3V7M6 13v2.500" fill="none" stroke="#333" /></svg>
      </label>
      <button aria-label="Task view" className="flex w-[42px] items-center justify-center pr-1">
        <svg viewBox="0 0 14 14" className="size-[14px]" fill="none" stroke="#e6e6e6"><path d="M1 0v3h8V0M1 14v-3h8v3M1.500 4.500h7v5h-7zM12 0v14M11 5h2v3h-2" /></svg>
      </button>
      <nav className="flex w-[412px]">
        {apps.map((a) => (
          <button
            key={a.name}
            aria-label={a.name}
            className={`flex flex-1 flex-col items-center ${a.active ? "bg-[#454648]" : ""}`}
          >
            <span className="flex flex-1 items-center pt-[2px]">
              {a.active ? (
                <CatiaMark className="size-5 border border-white" />
              ) : (
                <svg viewBox="0 0 20 20" className="size-5" fontFamily="Open Sans, sans-serif">{a.art}</svg>
              )}
            </span>
            <span className={`h-[2px] ${a.active ? "w-full" : "w-[34px]"} ${a.open ? "bg-[#b4b4b4]" : ""}`} />
          </button>
        ))}
      </nav>
      <div className="ml-auto flex items-center">
        <button aria-label="People" className="mr-[10px] flex w-5 justify-center">
          <svg viewBox="0 0 14 14" className="size-[14px]" fill="none" stroke="#e6e6e6" strokeWidth="1.200"><circle cx="9.500" cy="3" r="2.200" /><path d="M6 9q0-3 3.500-3.500T13 9" /><circle cx="4" cy="7.500" r="2" /><path d="M1 13q0-3 3-3t3 3" /></svg>
        </button>
        <button aria-label="Show hidden icons" className="flex w-5 justify-center">
          <svg viewBox="0 0 12 8" className="h-2 w-3"><path d="M1 7l5-5 5 5" fill="none" stroke="#eee" strokeWidth="1.200" /></svg>
        </button>
        <button aria-label="OneDrive" className="flex w-5 justify-center">
          <svg viewBox="0 0 14 12" className="h-3 w-[14px]"><path d="M1 9Q0 5 4 4.500 6 0 10 3q3 1 3 6z" fill="#c3c7ca" /><circle cx="10.500" cy="8.500" r="3.500" fill="#e8f4fb" /><path d="M8.500 8.500h4M10.500 6.500v4" stroke="#2b7cb4" strokeWidth="1.200" /></svg>
        </button>
        <button aria-label="Battery" className="flex w-5 justify-center">
          <svg viewBox="0 0 14 10" className="h-[10px] w-[14px]"><path d="M1.500 1.500h10v7h-10zM12 4h1.500v2H12z" fill="none" stroke="#eee" /><path d="M3 3h3v4H3z" fill="#eee" /></svg>
        </button>
        <button aria-label="Network" className="flex w-5 justify-center">
          <svg viewBox="0 0 14 14" className="size-[14px]"><path d="M3 5Q8 0 13 2M6 8q3-4 7-3M9 11q1-3 4-3" fill="none" stroke="#8c8c8c" strokeWidth="1.200" /><circle cx="5" cy="9" r="4" fill="#d12a34" /><path d="M3.500 7.500l3 3M6.500 7.500l-3 3" stroke="#fff" /></svg>
        </button>
        <button aria-label="Volume" className="flex w-5 justify-center">
          <svg viewBox="0 0 14 12" className="h-3 w-[14px]" fill="none" stroke="#eee"><path d="M1 4h2l3-3v10L3 8H1zM9 4l4 4M13 4L9 8" /></svg>
        </button>
        <div className="flex w-[58px] flex-col items-center text-[10px] leading-[15px]">
          <span>11:29 AM</span>
          <span>2/9/2020</span>
        </div>
        <button aria-label="Notifications" className="flex w-[38px] justify-center">
          <svg viewBox="0 0 22 22" className="size-[22px]" fontFamily="Open Sans, sans-serif">
            <path d="M2 3h14v11H8l-3 3v-3H2z" fill="#fff" />
            <path d="M4.500 6h9M4.500 8.500h9M4.500 11h5" stroke="#222" />
            <circle cx="15" cy="15" r="6" fill="#2e2e30" stroke="#777" />
            <text x="12.500" y="18.500" fontSize="9" fill="#fff">1</text>
          </svg>
        </button>
        <span className="h-[34px] w-[5px] border-l border-[#55565a]" />
      </div>
    </div>
  );
}

export default function App() {
  return (
    <div className="flex h-screen flex-col overflow-hidden font-['Open_Sans','Noto_Sans',sans-serif]">
      <div className="flex min-h-0 flex-1 bg-[#5b5a58]">
        <div className="flex w-[7px] shrink-0 flex-col">
          <div className="flex h-[19px] items-center bg-[#f2eef0] pl-[2px]"><span className="h-3 w-1 bg-[#b23a56]" /></div>
          <div className="h-4 bg-[#c4c3c3]" />
          <div className="h-[26px] border-t border-[#444] bg-[#efeff0]" />
        </div>
        <div className="flex min-w-0 flex-1 flex-col">
          <div className="flex min-h-0 flex-1 flex-col border-r border-b border-[#8b8b96]">
            <TitleBar />
            <MenuBar />
            <main className="relative flex min-h-0 flex-1">
              <ScrollRail />
              <div className="relative min-w-0 flex-1 overflow-hidden bg-[linear-gradient(to_bottom,#353465_0%,#3f3d6f_35%,#474577_60%,#545282_70%,#716f95_80%,#9290ac_91%,#adacbd_100%)]">
                <Scene />
                <SpecTree />
                <Compass />
                <AxisTriad />
              </div>
              <RightRail />
              <FloatBar label="Wireframe" groups={wireframe} slot="h-5 w-[25px]" className="top-[152px] right-[95px] w-[25px]" />
              <FloatBar label="Surfaces" groups={surfaces} slot="h-[19px] w-[23px]" className="top-[153px] right-[59px] w-[23px]" />
              <FloatBar label="Operations" groups={operations} slot="h-5 w-[25px]" className="top-[174px] right-[23px] w-[25px]" />
            </main>
            <BottomBar />
            <StatusBar />
          </div>
          <div className="ml-6 h-[3px] bg-[#dcdcdc]" />
          <div className="h-[3px] bg-[#4a4a4c]" />
        </div>
        <div className="flex w-[9px] shrink-0 flex-col bg-[#e4e4e6] shadow-[inset_4px_0_4px_-2px_#8a8a90]">
          <div className="h-[19px] bg-[#f8f8f8]" />
          <div className="flex h-[17px] items-center border-b border-[#333] bg-[#bdbdbf]">
            <svg viewBox="0 0 5 6" className="h-[6px] w-[5px]"><path d="M4 1L1 3l3 2" fill="none" stroke="#111" /></svg>
          </div>
          <div className="h-[26px] border-r border-b border-[#333] bg-[#dededf]" />
          <svg viewBox="0 0 8 6" className="mt-1 h-[6px] w-2"><path d="M1 5l3-3 3 3" fill="none" stroke="#333" /></svg>
          <div className="mt-auto h-[116px] bg-[#c3c3c6]" />
          <svg viewBox="0 0 8 6" className="my-1 h-[6px] w-2"><path d="M1 1l3 3 3-3" fill="none" stroke="#333" /></svg>
        </div>
      </div>
      <Taskbar />
    </div>
  );
}
